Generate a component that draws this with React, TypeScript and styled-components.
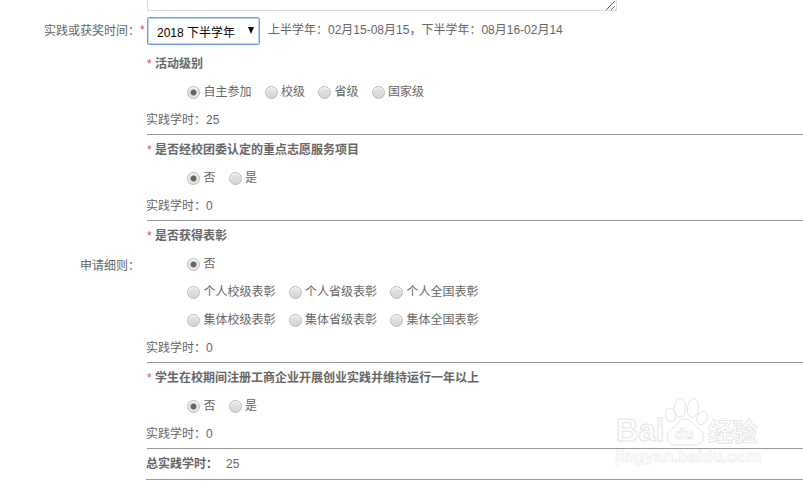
import styled, { createGlobalStyle } from "styled-components";

const GlobalStyle = createGlobalStyle`
  html, body {
    margin: 0;
    padding: 0;
    background: #fff;
    overflow: hidden;
  }
  body {
    font-family: "Liberation Sans", "Noto Sans CJK SC", sans-serif;
    font-size: 12px;
    color: #666;
  }
`;

const Page = styled.div`
  position: relative;
  width: 803px;
  height: 485px;
  overflow: hidden;
`;

const FormRow = styled.div`
  display: flex;
  align-items: flex-start;
`;

const Label = styled.div`
  width: 140px;
  flex: none;
  text-align: right;
  line-height: 28px;
`;

const RequiredMark = styled.span`
  color: #c55;
  font-size: 12px;
  font-weight: normal;
`;

const LabelMark = styled(RequiredMark)`
  width: 7px;
  flex: none;
  line-height: 26px;
`;

const TextareaBox = styled.div`
  margin-left: 147px;
  width: 470px;
  height: 11px;
  box-sizing: border-box;
  position: relative;
  border: 1px solid #ddd;
  border-top: 0;
`;

const Grip = styled.svg`
  position: absolute;
  right: 0;
  bottom: 0;
`;

const TimeRow = styled(FormRow)`
  margin-top: 6px;
  height: 29px;
`;

const SelectBox = styled.div`
  width: 113px;
  height: 28px;
  box-sizing: border-box;
  flex: none;
  display: flex;
  align-items: center;
  justify-content: space-between;
  padding: 1px 5px 0 9px;
  border: 1px solid #6f9fec;
  border-radius: 2px;
  box-shadow: inset 0 0 0 1px #bcd3f8;
  color: #000;
  font-size: 12px;
`;

const Caret = styled.span`
  width: 0;
  height: 0;
  margin-top: -2px;
  border-left: 3.5px solid transparent;
  border-right: 3.5px solid transparent;
  border-top: 7px solid #111;
`;

const Hint = styled.span`
  margin-left: 8px;
  line-height: 26px;
`;

const DetailRow = styled.div`
  display: flex;
  margin-top: 3px;
`;

const DetailLabel = styled(Label)`
  padding-top: 203px;
`;

const Sections = styled.div`
  margin-left: 7px;
  flex: 1;
`;

const Section = styled.div<{ $rows: number }>`
  border-bottom: 1px solid #999;
  height: ${(p) => p.$rows * 28 + 1}px;
`;

const Title = styled.div`
  height: 28px;
  line-height: 30px;
  font-weight: bold;
`;

const RadioRow = styled.div`
  height: 28px;
  box-sizing: border-box;
  padding: 2px 0 0 40px;
  display: flex;
  align-items: center;
  gap: 13px;
`;

const RadioItem = styled.label`
  display: flex;
  align-items: center;
  gap: 3.5px;
  line-height: 26px;
`;

const RadioDot = styled.span<{ $on?: boolean }>`
  width: 13px;
  height: 13px;
  box-sizing: border-box;
  flex: none;
  border-radius: 50%;
  border: 1px solid #b9b9b9;
  background: ${(p) =>
    p.$on
      ? "radial-gradient(circle, #666 0 2.6px, #e6e6e6 3.4px)"
      : "linear-gradient(#e6e6e6, #d4d4d4)"};
  box-shadow: inset 0 1px 1px #fff;
`;

const Hours = styled.div`
  height: 28px;
  line-height: 30px;
  margin-left: -1px;
`;

const TotalRow = styled.div`
  height: 30px;
  line-height: 30px;
  border-bottom: 1px solid #999;
  display: flex;
  gap: 8px;
  margin-left: -1px;
`;

const TotalLabel = styled.span`
  font-weight: bold;
`;

const Watermark = styled.div`
  position: absolute;
  left: 615px;
  top: 398px;
  width: 190px;
  height: 80px;
  color: #fff;
  pointer-events: none;
`;

const PawIcon = styled.svg`
  position: absolute;
  left: 50px;
  top: 0;
`;

const BrandBa = styled.span`
  position: absolute;
  left: 1px;
  top: 15px;
  font-size: 31px;
  line-height: 36px;
  font-weight: bold;
  -webkit-text-stroke: 1px #e6e6e6;
`;

const BrandDu = styled.span`
  position: absolute;
  left: 60px;
  top: 26px;
  font-size: 15px;
  line-height: 20px;
  font-weight: bold;
  -webkit-text-stroke: 0.6px #e2e2e2;
`;

const BrandCn = styled.span`
  position: absolute;
  left: 93px;
  top: 18px;
  font-size: 25px;
  line-height: 32px;
  font-weight: bold;
  letter-spacing: -1px;
  -webkit-text-stroke: 0.8px #e4e4e4;
`;

const BrandUrl = styled.span`
  position: absolute;
  left: 0;
  top: 48px;
  font-size: 16.7px;
  line-height: 22px;
  font-weight: bold;
  -webkit-text-stroke: 0.7px #ebebeb;
`;

type Option = { text: string; on?: boolean };

const Radios = ({ options }: { options: Option[] }) => (
  <RadioRow>
    {options.map((o) => (
      <RadioItem key={o.text}>
        <RadioDot $on={o.on} />
        {o.text}
      </RadioItem>
    ))}
  </RadioRow>
);

const SectionTitle = ({ text }: { text: string }) => (
  <Title>
    <RequiredMark>*</RequiredMark> {text}
  </Title>
);

export default function App() {
  return (
    <Page>
      <GlobalStyle />
      <TextareaBox>
        <Grip width="12" height="10" viewBox="0 0 12 10">
          <path d="M2 10 L11 1 M7 10 L11 6" stroke="#666" strokeWidth="1" fill="none" />
        </Grip>
      </TextareaBox>

      <TimeRow>
        <Label>实践或获奖时间：</Label>
        <LabelMark>*</LabelMark>
        <SelectBox>
          2018 下半学年
          <Caret />
        </SelectBox>
        <Hint>上半学年：02月15-08月15，下半学年：08月16-02月14</Hint>
      </TimeRow>

      <DetailRow>
        <DetailLabel>申请细则：</DetailLabel>
        <Sections>
          <Section $rows={3}>
            <SectionTitle text="活动级别" />
            <Radios
              options={[
                { text: "自主参加", on: true },
                { text: "校级" },
                { text: "省级" },
                { text: "国家级" },
              ]}
            />
            <Hours>实践学时：25</Hours>
          </Section>
          <Section $rows={3}>
            <SectionTitle text="是否经校团委认定的重点志愿服务项目" />
            <Radios options={[{ text: "否", on: true }, { text: "是" }]} />
            <Hours>实践学时：0</Hours>
          </Section>
          <Section $rows={5}>
            <SectionTitle text="是否获得表彰" />
            <Radios options={[{ text: "否", on: true }]} />
            <Radios
              options={[{ text: "个人校级表彰" }, { text: "个人省级表彰" }, { text: "个人全国表彰" }]}
            />
            <Radios
              options={[{ text: "集体校级表彰" }, { text: "集体省级表彰" }, { text: "集体全国表彰" }]}
            />
            <Hours>实践学时：0</Hours>
          </Section>
          <Section $rows={3}>
            <SectionTitle text="学生在校期间注册工商企业开展创业实践并维持运行一年以上" />
            <Radios options={[{ text: "否", on: true }, { text: "是" }]} />
            <Hours>实践学时：0</Hours>
          </Section>
          <TotalRow>
            <TotalLabel>总实践学时：</TotalLabel>
            25
          </TotalRow>
        </Sections>
      </DetailRow>

      <Watermark>
        <PawIcon width="44" height="50" viewBox="0 0 44 50">
          <g fill="#fff" stroke="#e6e6e6" strokeWidth="1">
            <ellipse cx="5.5" cy="17" rx="5" ry="7" transform="rotate(-15 5.5 17)" />
            <ellipse cx="15" cy="10" rx="5.5" ry="9.5" />
            <ellipse cx="28" cy="10" rx="5.5" ry="9.5" transform="rotate(8 28 10)" />
            <ellipse cx="37" cy="20" rx="5" ry="7" transform="rotate(25 37 20)" />
            <path d="M20 21 C27 21 29 28 34 31 C42 36 39 47 30 47 L11 47 C2 47 -1 36 7 31 C13 28 13 21 20 21 Z" />
          </g>
        </PawIcon>
        <BrandBa>Bai</BrandBa>
        <BrandDu>du</BrandDu>
        <BrandCn>经验</BrandCn>
        <BrandUrl>jingyan.baidu.com</BrandUrl>
      </Watermark>
    </Page>
  );
}
